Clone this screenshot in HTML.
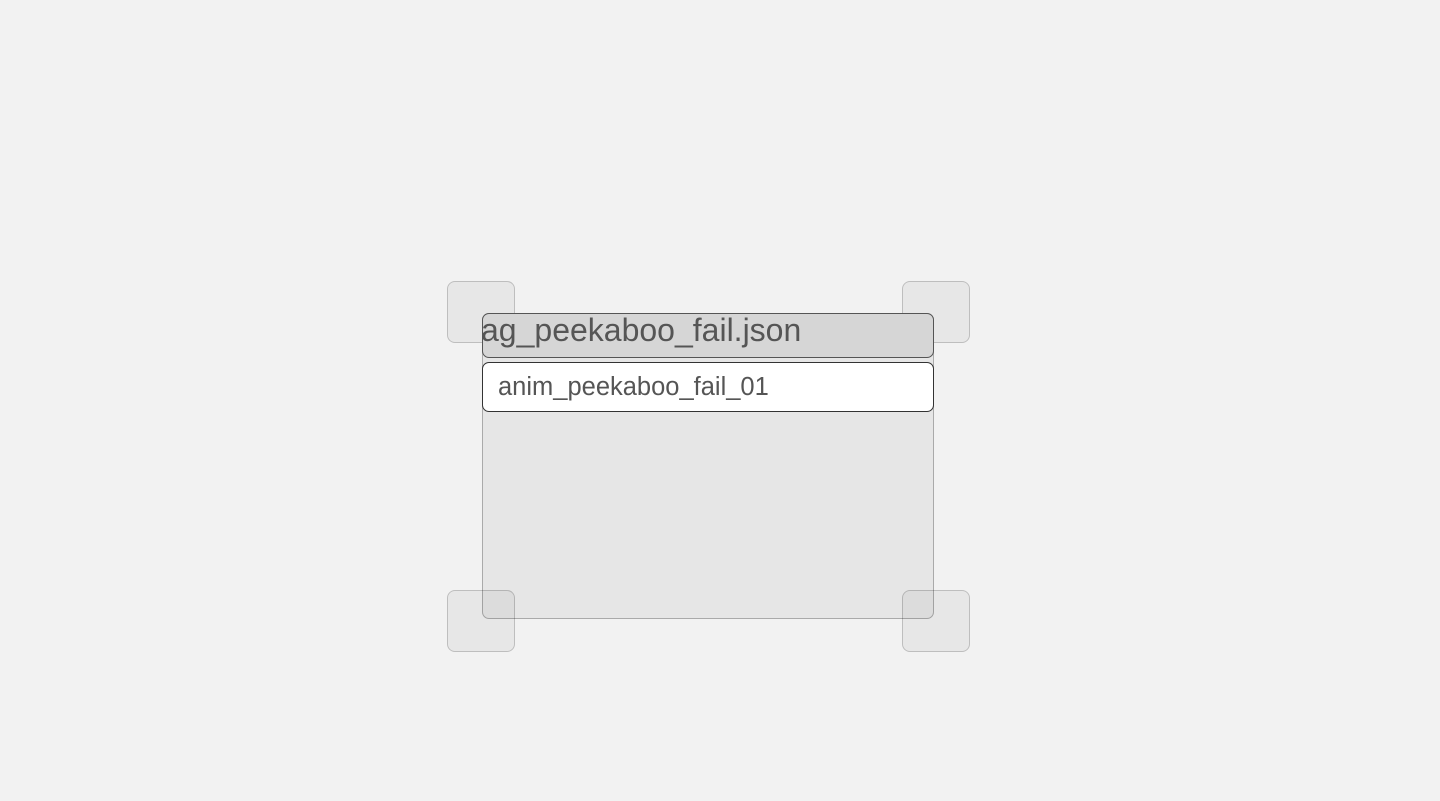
<!DOCTYPE html>
<html><head><style>
html,body{margin:0;padding:0;width:1440px;height:801px;background:#f2f2f2;overflow:hidden;font-family:"Liberation Sans",Arial,sans-serif;}
.a{position:absolute;box-sizing:border-box;}
.sq{width:68px;height:62px;border:1px solid rgba(0,0,0,0.18);border-radius:8px;background:rgba(0,0,0,0.045);}
</style></head><body>
<div class="a sq" style="left:447px;top:281px;"></div>
<div class="a sq" style="left:902px;top:281px;"></div>
<div class="a" style="left:482px;top:313px;width:452px;height:306px;background:#e6e6e6;border:1px solid #aaa;border-radius:7px;"></div>
<div class="a" style="left:482px;top:313px;width:452px;height:45px;background:#d6d6d6;border:1px solid #555;border-radius:7px;overflow:hidden;">
<div style="position:absolute;left:-2px;top:-3px;font-size:32px;line-height:38px;color:#555;white-space:nowrap;">ag_peekaboo_fail.json</div></div>
<div class="a" style="left:482px;top:362px;width:452px;height:50px;background:#fff;border:1px solid #333;border-radius:7px;">
<div style="position:absolute;left:15px;top:9px;font-size:25.5px;line-height:30px;color:#555;white-space:nowrap;">anim_peekaboo_fail_01</div></div>
<div class="a sq" style="left:447px;top:590px;"></div>
<div class="a sq" style="left:902px;top:590px;"></div>
</body></html>
